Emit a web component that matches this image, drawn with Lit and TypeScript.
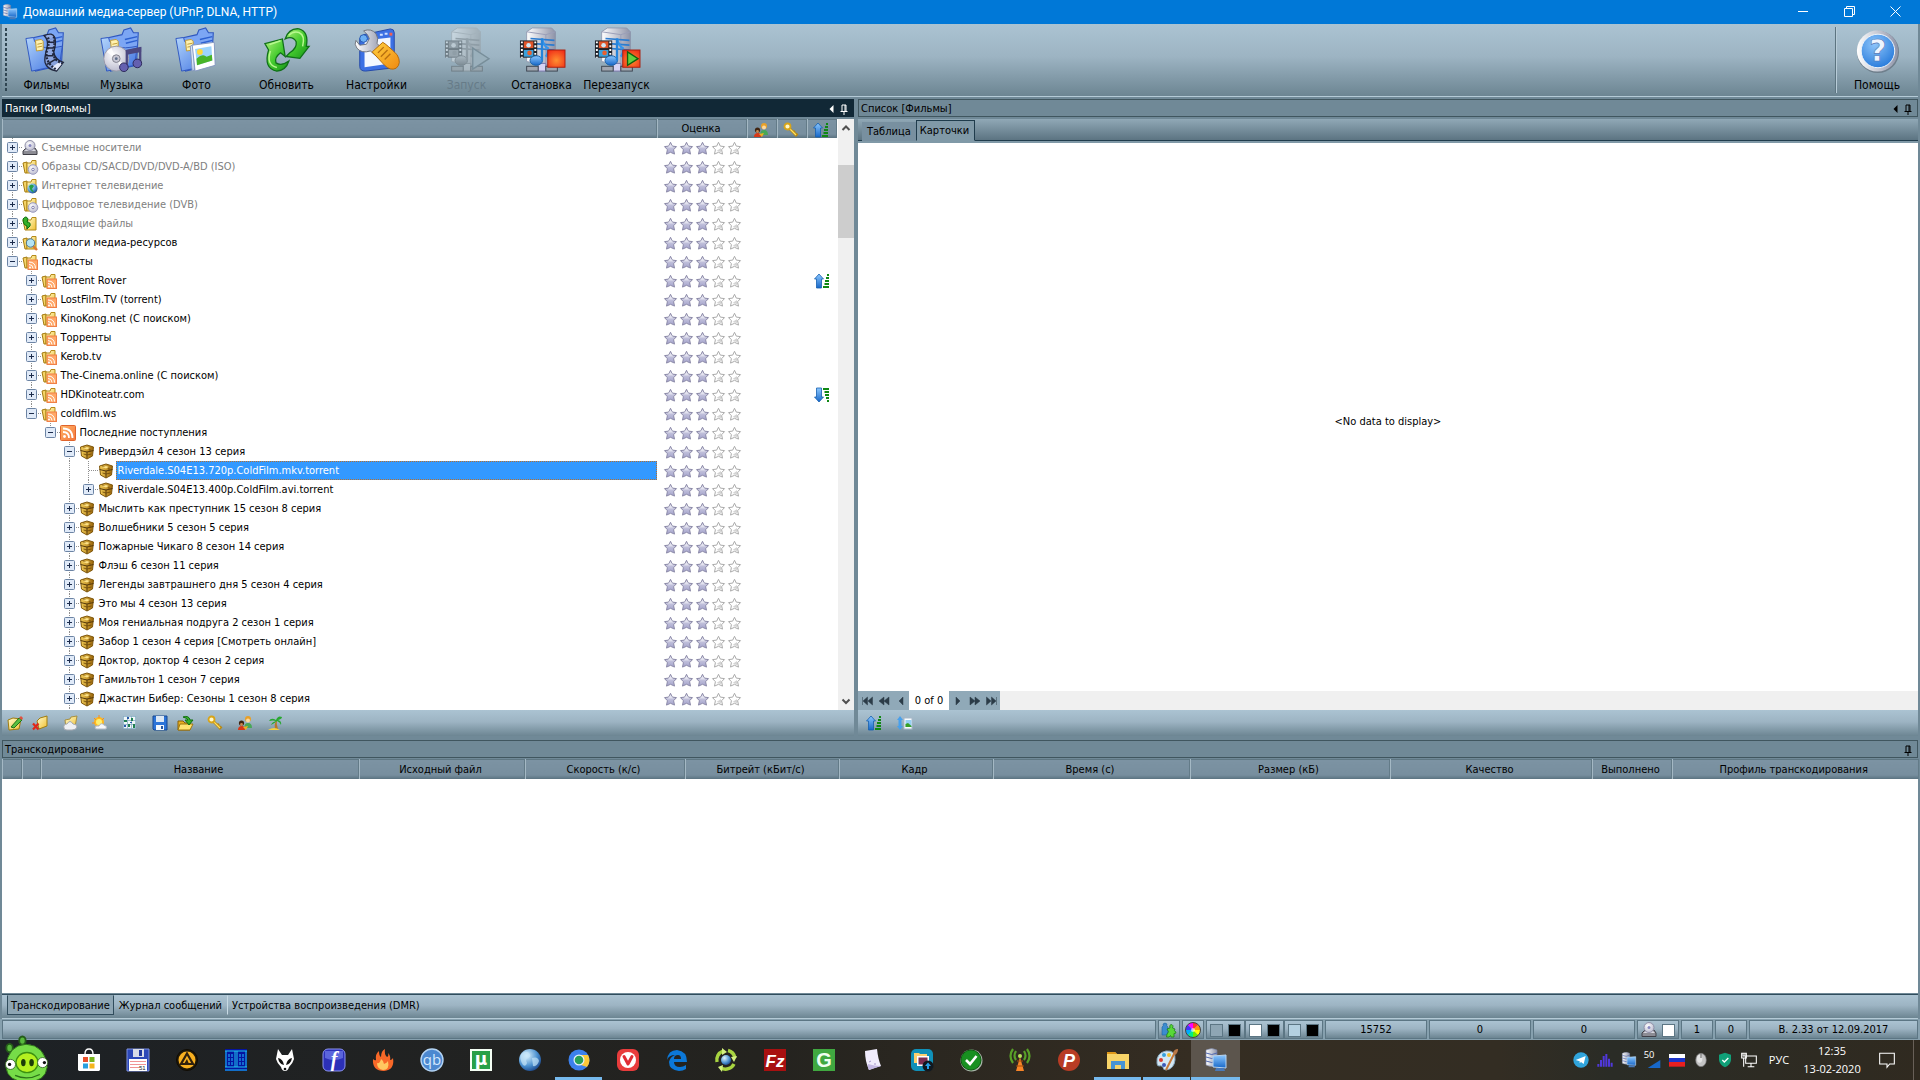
import { LitElement, html, svg, css, nothing } from "lit";
import { customElement, state } from "lit/decorators.js";
import { classMap } from "lit/directives/class-map.js";

/* ---------- shared icon parts ---------- */
const gradients = svg`
  <linearGradient id="gBlue" x1="0" y1="0" x2="1" y2="1"><stop offset="0" stop-color="#b4d6fb"/><stop offset="1" stop-color="#3c6fe0"/></linearGradient>
  <linearGradient id="gSky" x1="0" y1="0" x2="0" y2="1"><stop offset="0" stop-color="#8cc8ff"/><stop offset="1" stop-color="#1767c8"/></linearGradient>
  <linearGradient id="gGreen" x1="0" y1="0" x2="1" y2="1"><stop offset="0" stop-color="#b0f078"/><stop offset=".5" stop-color="#46cc30"/><stop offset="1" stop-color="#159316"/></linearGradient>
  <linearGradient id="gOrange" x1="0" y1="0" x2="1" y2="1"><stop offset="0" stop-color="#ffd040"/><stop offset="1" stop-color="#f08a10"/></linearGradient>
  <linearGradient id="gRss" x1="0" y1="0" x2="1" y2="1"><stop offset="0" stop-color="#ffb468"/><stop offset="1" stop-color="#f5763a"/></linearGradient>
  <linearGradient id="gGold" x1="0" y1="0" x2="1" y2="0"><stop offset="0" stop-color="#f5cf58"/><stop offset="1" stop-color="#9a6408"/></linearGradient>
  <linearGradient id="gFolder" x1="0" y1="0" x2="1" y2="1"><stop offset="0" stop-color="#fffbd0"/><stop offset="1" stop-color="#f0c030"/></linearGradient>
  <linearGradient id="gSteel" x1="0" y1="0" x2="1" y2="0"><stop offset="0" stop-color="#ffffff"/><stop offset="1" stop-color="#8e93a8"/></linearGradient>
  <linearGradient id="gStar" x1="0" y1="0" x2="0" y2="1"><stop offset="0" stop-color="#dcdce8"/><stop offset="1" stop-color="#a3a2cc"/></linearGradient>
  <radialGradient id="gRed" cx=".5" cy=".6" r=".7"><stop offset="0" stop-color="#ff9030"/><stop offset="1" stop-color="#f02c18"/></radialGradient>
  <radialGradient id="gHelp" cx=".4" cy=".3" r=".8"><stop offset="0" stop-color="#8cc4fa"/><stop offset="1" stop-color="#1f74d8"/></radialGradient>
  <radialGradient id="gGlobe" cx=".35" cy=".3" r=".8"><stop offset="0" stop-color="#e0f6ff"/><stop offset=".6" stop-color="#4a90d0"/><stop offset="1" stop-color="#143c80"/></radialGradient>
  <radialGradient id="gDisc" cx=".4" cy=".35" r=".7"><stop offset="0" stop-color="#ffffff"/><stop offset="1" stop-color="#b8b8cc"/></radialGradient>`;

const bigFolder = svg`
  <path d="M6 12 L24 8 L26 3 L33 1 L36 6 L41 6 L39 40 L12 46Z" fill="#7ca6f4" stroke="#3058c0" stroke-width="1.200"/>
  <path d="M27 13 L40 10 M28 17 L40 14" stroke="#2c60d0" stroke-width="1.500"/>
  <path d="M2 12 L10 11 Q12 26 40 20 L37 40 L8 46Z" fill="url(#gBlue)" stroke="#3058c0"/>
  <path d="M12 14 L18 13 L20 15 V24 L13 25Z" fill="#fff2b0" stroke="#c09a30"/>
  <path d="M14 18 L19 17 M14 21 L19 20" stroke="#c09a30"/>`;

const serverBase = svg`
  <path d="M8 5 L14 1 H34 L38 5 V36 L28 40 L8 36Z" fill="url(#gSteel)" stroke="#8890a8" stroke-width=".8"/>
  <path d="M8 5 L28 8 L38 5 M28 8 V38" fill="none" stroke="#9a9eb8"/>
  <path d="M12 12 L37 14 M12 17 L37 19 M12 22 L37 24" stroke="#2c7cd0" stroke-width="1.800"/>
  <path d="M20 38 H28 V46 H20Z" fill="#d6d4f4" stroke="#7874a8"/>
  <rect x="8" y="41" width="12" height="5" fill="#a0a6b0" stroke="#3c4450"/>
  <rect x="28" y="41" width="12" height="5" fill="#a0a6b0" stroke="#3c4450"/>
  <rect x="1" y="14" width="18" height="18" fill="#20242c"/>
  <path d="M3 15 V32 M17 15 V32" stroke="#fff" stroke-width="2" stroke-dasharray="2 2"/>
  <rect x="5" y="15" width="10" height="7" fill="#e05428"/><rect x="5" y="24" width="10" height="7" fill="#3aa0dc"/>
  <circle cx="10" cy="19" r="2.400" fill="#d0e8f4"/><circle cx="11" cy="27" r="2.400" fill="#e86030"/>
  <path d="M24 12 Q26 20 30 22 Q31 27 28 31" fill="none" stroke="#3494ec" stroke-width="2.400"/>
  <ellipse cx="18" cy="35" rx="6.500" ry="5" fill="url(#gSky)" stroke="#1860a8"/>
  <path d="M24 12 V35" stroke="#2484dc" stroke-width="2.400"/>`;

const key = svg`
  <path d="M6 6 L13.500 13.500 M10 11 L12 9 M12 14 L14.500 11.500" stroke="#b88810" stroke-width="2.600"/>
  <path d="M6 6 L13 13" stroke="#ffe060" stroke-width="1.300"/>
  <circle cx="4.500" cy="4.500" r="3" fill="#fff8c8" stroke="#d8a418" stroke-width="1.800"/>`;

const smallFolder = svg`
  <path d="M1 4 L5 3 V14 L3 14Z" fill="#f4d468" stroke="#a47a10"/>
  <path d="M5 4 H9 L10 1.500 H14 V14 H5Z" fill="url(#gFolder)" stroke="#b48a18"/>`;

const people = svg`
  <circle cx="4.500" cy="8" r="2.600" fill="#402410"/><path d="M1 15 Q1 11 5 11 Q8 11 8 15Z" fill="#d83818"/>
  <circle cx="4.500" cy="9.500" r="1.400" fill="#c88850"/>
  <circle cx="11" cy="4" r="3" fill="#e8a028"/><circle cx="11" cy="5.500" r="2" fill="#fcd8a0"/>
  <path d="M7.500 13 Q7 8 11 8 Q15 8 15 13Z" fill="#48a858"/><path d="M6 12 L9 15 L11 11Z" fill="#f0b020"/>`;

const sortBars = (up: boolean) => svg`
  <path d=${up ? "M5 1 L9.500 6 H7.500 V15 H2.500 V6 H.5Z" : "M5 15 L9.500 10 H7.500 V1 H2.500 V10 H.5Z"} fill="url(#gSky)" stroke="#1560b0" stroke-width=".8"/>
  <path d=${up ? "M13 2 H15 M12 5 H15 M11 8 H15 M10.500 11 H15 M9 14 H15" : "M9 2 H15 M10.500 5 H15 M11 8 H15 M12 11 H15 M13 14 H15"} stroke="#108814" stroke-width="2"/>`;

const serverMonitor = svg`
  <path d="M2 2 Q8 -1 13 2 V17 Q8 20 2 17Z" fill="url(#gSteel)" stroke="#7884a8" stroke-width=".6"/>
  <path d="M2 5 Q8 8 13 5 M2 9 Q8 12 13 9 M2 13 Q8 16 13 13" stroke="#5068b0" fill="none"/>
  <path d="M9 8 L22 7 V20 L9 19Z" fill="url(#gSky)" stroke="#b8d4f0"/>
  <path d="M12 20 H20 L21 23 H11Z" fill="#4878b8"/>`;

const wave = svg`<circle cx="4.500" cy="11.500" r="1.400" fill="#fff"/><path d="M3 7 Q9 7 9 13 M3 3.500 Q12.500 3.500 12.500 13" stroke="#fff" stroke-width="1.800" fill="none"/>`;

const icons: Record<string, unknown> = {
  films: svg`${bigFolder}
    <path d="M21 9 Q30 5 32 11 Q34 17 31 26 Q32 34 41 37 L34 46 Q24 44 22 37 Q21 32 24 22 Q26 13 21 9Z" fill="#9cacd8" fill-opacity=".7" stroke="#20263c" stroke-width="1.400"/>
    <path d="M25 16 H32 M24 22 H31 M22 30 H31 M24 39 L34 33" stroke="#20263c" stroke-width="1.600"/>
    <path d="M29 42 L36 37 L40 38 L34 45Z" fill="#e6eafc"/>
    <path d="M25 11 Q27 16 24 24 Q21 36 33 44 M31 10 Q33 16 30 26 Q31 35 40 38" fill="none" stroke="#20263c" stroke-width="2.400" stroke-dasharray="2 1.500"/>`,
  music: svg`${bigFolder}
    <circle cx="18" cy="33" r="13" fill="url(#gDisc)" stroke="#9a9aa8"/>
    <path d="M18 33 L8 26 A12 12 0 0 1 13 22Z M18 33 L28 40 A12 12 0 0 1 23 44Z" fill="#fff" opacity=".8"/>
    <circle cx="18" cy="33" r="4" fill="#c8c8d4" stroke="#80808c"/><circle cx="18" cy="33" r="1.500" fill="#60708c"/>
    <path d="M29 42 V25 L43 22 V38" fill="none" stroke="#4c4880" stroke-width="2.400"/><path d="M29 24 L44 21 V26 L29 29Z" fill="#4c4880"/>
    <ellipse cx="26" cy="42" rx="4.500" ry="4.500" fill="#6460b0" stroke="#2c2858"/><ellipse cx="40" cy="38" rx="4.500" ry="4.500" fill="#6460b0" stroke="#2c2858"/>`,
  photo: svg`${bigFolder}
    <path d="M17 20 L21 18 V45 L19 46Z" fill="#dce8fa" stroke="#8498c0"/>
    <path d="M19 19 L42 16 L43 40 L22 46Z" fill="#fff" stroke="#8498c0"/>
    <path d="M22 23 L39 20 L40 35 L24 40Z" fill="#9cd4fc"/><path d="M24 40 L23.500 33 Q30 27 34 31 L39.500 29 L40 35Z" fill="#48b428"/>
    <circle cx="27" cy="26" r="3" fill="#ffd838"/>`,
  refresh: svg`
    <path d="M24 12 Q28 0 39 1 Q50 4 47 20 L50 20 L40 33 L25 31 L29 27 Q37 22 36 15 Q32 8 24 12Z" fill="url(#gGreen)" stroke="#107018" stroke-width="1.400"/>
    <path d="M28 8 Q33 3 39 5 Q46 8 43 20" fill="none" stroke="#b8f890" stroke-width="1.600"/>
    <path d="M2 17 L21 12 L24 31 L19 27 Q12 32 14 38 Q20 42 28 36 Q25 46 15 47 Q0 44 6 24Z" fill="url(#gGreen)" stroke="#107018" stroke-width="1.400"/>
    <path d="M8 25 Q3 40 15 43 M7 18 L19 14" fill="none" stroke="#b8f890" stroke-width="1.600"/>`,
  settings: svg`
    <path d="M10 8 L38 2 Q42 2 42 6 V38 Q42 42 38 43 L12 46 Q6 46 6 41 V12Z" fill="#3c70e4" stroke="#2448a8"/>
    <path d="M11 14 L38 11 V38 L11 42Z" fill="#f4f8ff"/>
    <path d="M27 8 H30 M32 7 H35" stroke="#cfe0ff" stroke-width="2"/><rect x="37" y="6" width="3" height="3" fill="#f06050"/>
    <circle cx="10" cy="12" r="4" fill="#6cb0f4" stroke="#2858b0"/>
    <path d="M10 4 Q18 1 23 7 Q26 12 24 17 L31 25 L25 32 L17 25 Q8 28 3 22 Q0 18 2 14 L6 19 L13 18 L16 12 L14 8Z" fill="url(#gSteel)" stroke="#70747c"/>
    <path d="M19 26 L30 16 Q34 18 45 29 Q50 38 44 43 Q38 46 32 40Z" fill="url(#gOrange)" stroke="#b46808"/>
    <path d="M25 27 L31 21 M28 31 L35 24 M32 34 L38 28" stroke="#b87010" stroke-width="1.400"/>`,
  start: svg`<g opacity=".38" filter="grayscale(1)">${serverBase}</g><path d="M30 22 L47 33 L30 44Z" fill="#9ab0bc" stroke="#788e9a" stroke-width="1.400"/>`,
  stop: svg`${serverBase}<rect x="30" y="24" width="18" height="18" fill="url(#gRed)" stroke="#a82010"/>`,
  restart: svg`${serverBase}<rect x="30" y="24" width="18" height="18" fill="url(#gRed)" stroke="#a82010"/><path d="M35 26 L46 33 L35 40Z" fill="#64d040" stroke="#106010" stroke-width="1.400"/>`,
  help: svg`
    <circle cx="25" cy="26" r="22" fill="#6f7f8c"/><circle cx="24.500" cy="25" r="21.500" fill="url(#gSteel)"/>
    <circle cx="25" cy="25" r="17.500" fill="url(#gHelp)" stroke="#f4f8fc"/>
    <text x="25" y="36" text-anchor="middle" font-family="DejaVu Sans, sans-serif" font-weight="700" font-size="31" fill="#eef4ff" stroke="#4c74b4" stroke-width=".6">?</text>`,

  drive: svg`<path d="M1 11 L4 8 H13 L15 11 V14.500 H1Z" fill="#8c8c94" stroke="#404048"/><path d="M2 11 L5 9 H12 L14 11Z" fill="#d8d8e0"/><circle cx="8" cy="5.500" r="5" fill="url(#gDisc)" stroke="#9090a8"/><circle cx="8" cy="5.500" r="1.500" fill="#8888c0"/>`,
  fDisc: svg`${smallFolder}<circle cx="11" cy="10.500" r="4.800" fill="url(#gDisc)" stroke="#9c9cc0"/><circle cx="11" cy="10.500" r="1.300" fill="#fff" stroke="#8080b0"/>`,
  fGlobe: svg`${smallFolder}<circle cx="10.500" cy="10.500" r="5" fill="url(#gGlobe)"/><path d="M7 8 Q10 5 12 8 L10 11 L12 14 Q8 14 7 8Z" fill="#28a048"/>`,
  fIn: svg`${smallFolder}<path d="M1 3 Q4 -1 6 3 L5 6 Q9 6 8 10 L5 13 V10 Q1 9 1 3Z" fill="#34b028" stroke="#0c6c10"/>`,
  fSearch: svg`${smallFolder}<path d="M11 11 L15 15" stroke="#e07830" stroke-width="2.400"/><circle cx="8.500" cy="8" r="4.200" fill="#b4e4f4" stroke="#507890"/>`,
  fRss: svg`${smallFolder}<rect x="6" y="6" width="9.500" height="9.500" fill="#ffa868" stroke="#f08048"/><circle cx="8" cy="13.500" r="1" fill="#fff"/><path d="M7 10.500 Q11 10.500 11 14.500 M7 8 Q13.500 8 13.500 14.500" stroke="#fff" fill="none"/>`,
  rss: svg`<rect x=".5" y=".5" width="15" height="15" rx="1" fill="url(#gRss)" stroke="#e0642c"/>${wave}`,
  box: svg`<path d="M1.500 3 L8 1 L14.500 3 L13.500 12 L8 15 L2.500 12Z" fill="url(#gGold)" stroke="#80580c"/><path d="M1.500 6.500 L8 8 L14.500 6.500 M8 8 V14.500" fill="none" stroke="#54380a"/><path d="M4 2.800 L11 5 V8 M4.500 10 L8 11 L12.500 10" fill="none" stroke="#6c4808" stroke-width=".8"/><path d="M4 4 L8 3 L11 4 L8 5.500Z" fill="#ffe488"/>`,
  people, key,
  up: sortBars(true),
  down: sortBars(false),
  edit: svg`<path d="M1 5 L6 3 L14 4 L12 14 L2 15Z" fill="url(#gFolder)" stroke="#a07c10"/><path d="M4 12 L12 3 L15 5 L7 13Z" fill="#58c040" stroke="#207018"/><path d="M12 3 L14 1 L16 3 L15 5Z" fill="#e05040"/>`,
  remove: svg`<path d="M5 6 L8 3 L15 1 V11 L7 14Z" fill="url(#gFolder)" stroke="#a07c10"/><path d="M1 8.500 L6.500 14.500 M6.500 8.500 L1 14.500" stroke="#e02818" stroke-width="2.200"/>`,
  cloud: svg`<path d="M3 5 L8 4 L9 2 L15 1 L13 12 L4 13Z" fill="url(#gFolder)" stroke="#a89040"/><path d="M2 13 Q1 9 5 9 Q8 4 11 9 Q15 9 15 12 Q14 15 10 15 H5 Q2 15 2 13Z" fill="#eef0f4" stroke="#a4a8b0"/>`,
  sun: svg`<circle cx="7" cy="7" r="5" fill="#ffb820"/><circle cx="7" cy="7" r="3" fill="#fff070"/><path d="M2 3 L4 5 M7 0 V3 M0 8 H3 M12 3 L10 5" stroke="#f89018"/><path d="M3 13 Q3 10 7 11 Q9 7 12 10 Q16 11 14 14 H5 Q3 14 3 13Z" fill="#f4f6fa" stroke="#b0b8c4"/>`,
  grid: svg`<rect x="1" y="1" width="13" height="13" fill="#f0f8f8"/><path d="M1 1.500 H14 M1 5.500 H14 M1 9.500 H14 M1 13.500 H14 M1.500 1 V14 M5.500 1 V14 M9.500 1 V14 M13.500 1 V14" stroke="#88acc4" stroke-width=".8"/><path d="M2 5 H5 V7 H2Z M9 3 H11 V6 H9Z M6 9 H8 V12 H6Z M11 9 H13 V13 H11Z" fill="#208050"/><path d="M5 2 H7 V4 H5Z M8 7 H10 V8 H8Z M2 10 H4 V12 H2Z" fill="#2858a8"/>`,
  save: svg`<path d="M1 1 H15 V15 H2 L1 14Z" fill="#2c74d8" stroke="#164890"/><rect x="4" y="1" width="8" height="6" fill="#dce8f4"/><rect x="4" y="10" width="8" height="5" fill="#f4f8fc"/><rect x="9" y="11" width="2" height="3" fill="#2858a0"/>`,
  open: svg`<path d="M1 6 H6 L8 8 H13 V15 H1Z" fill="#e8b020" stroke="#886008"/><path d="M3 9 H16 L13 15 H1Z" fill="#ffe470" stroke="#a07810"/><path d="M6 2 Q12 0 13 5 H16 L12 10 L8 5 H11 Q10 3 6 2Z" fill="#38b028" stroke="#107010"/>`,
  palm: svg`<path d="M9 5 Q7 10 8 14 H11 Q9 9 10 5Z" fill="#b87828"/><path d="M9 5 Q4 2 2 6 Q6 5 9 6 Q5 7 4 10 Q8 8 10 6 Q13 7 14 10 Q15 6 11 5 Q15 4 15 2 Q11 0 9 5Z" fill="#28a830"/><path d="M1 15 Q7 11 13 15Z" fill="#f4d040"/>`,
  sortPic: svg`<path d="M4 1 L7 5 H5.500 V11 H7 L4 15 L1 11 H2.500 V5 H1Z" fill="#48a0ec"/><rect x="8" y="3" width="8" height="11" fill="#f8fcff" stroke="#a8b8c8"/><rect x="9.500" y="5" width="6" height="7" fill="#98d0f4"/><path d="M9.500 12 V9 L12 8 L15.500 11 V12Z" fill="#38a028"/>`,
  puzzle: svg`<path d="M1 5 Q3 4 2 2 Q4 0 6 2 Q5 4 7 5 V13 H1Z" fill="#3c8cd0" stroke="#2060a0" stroke-width=".6"/><path d="M6 7 L9 6 Q8 3 10 2.500 Q13 3 11.500 6 L14 7 Q12 9 15 10 Q15 12 13 11.500 V15 H10 Q10 12 8 15 H5.500 L6 12 Q9 10 6 7Z" fill="#58d838" stroke="#208018" stroke-width=".8"/>`,
  wheel: svg`<g>${["#f33", "#f0f", "#43f", "#0af", "#0e8", "#6e0", "#ff0", "#f90"].map((c, i) => svg`<path d="M8 8 L8 .500 A7.500 7.500 0 0 1 13.300 2.700Z" fill=${c} transform="rotate(${-45 * i} 8 8)"/>`)}</g><circle cx="8" cy="8" r="2" fill="#fff" opacity=".6"/><circle cx="8" cy="8" r="7.500" fill="none" stroke="#444"/>`,

  pig: svg`<ellipse cx="5" cy="13" rx="3.500" ry="4.500" fill="#58b83c" stroke="#245c18" stroke-width="2"/><ellipse cx="19" cy="5" rx="3.500" ry="4.500" fill="#58b83c" stroke="#245c18" stroke-width="2"/>
    <path d="M1 34 Q3 10 23 9 Q44 10 46 34 Q44 50 24 50 Q3 50 1 34Z" fill="#76dc48" stroke="#2c7018"/>
    <ellipse cx="24" cy="29" rx="12" ry="11" fill="#b4f020" stroke="#3c9010" stroke-width="1.400"/>
    <ellipse cx="20" cy="29" rx="2.500" ry="4" fill="#1c3c08"/><ellipse cx="29" cy="29" rx="2.500" ry="4" fill="#1c3c08"/>
    <circle cx="6" cy="31" r="5.500" fill="#fff" stroke="#3c7028"/><circle cx="41" cy="29" r="5.500" fill="#fff" stroke="#3c7028"/>
    <circle cx="5" cy="31" r="1.800" fill="#111"/><circle cx="43" cy="29" r="1.800" fill="#111"/>
    <path d="M11 43 Q24 49 38 42" stroke="#2c7018" fill="none" stroke-width="1.400"/>`,
  store: svg`<path d="M8 6 Q8 1 12 1 Q16 1 16 6" fill="none" stroke="#fff" stroke-width="1.400"/><path d="M1 6 H23 V22 L22 23 H2 L1 22Z" fill="#fff"/><rect x="6" y="9" width="5" height="5" fill="#e8502c"/><rect x="12.500" y="9" width="5" height="5" fill="#78b41c"/><rect x="6" y="15.500" width="5" height="5" fill="#28a0e0"/><rect x="12.500" y="15.500" width="5" height="5" fill="#f4b41c"/>`,
  floppy: svg`<path d="M1 1 H23 V23 H1Z" fill="#2c48b8" stroke="#7c90e0"/><rect x="7" y="1" width="11" height="8" fill="#d8dce8"/><rect x="13" y="2" width="3" height="6" fill="#2038a0"/><rect x="3" y="11" width="18" height="12" fill="#fff"/><path d="M4 13.500 H20 M4 16.500 H20 M4 19.500 H13" stroke="#f09494"/><text x="13" y="22" font-size="6" font-family="Liberation Sans, sans-serif" fill="#222">51</text>`,
  aimp: svg`<circle cx="12" cy="12" r="10.500" fill="#201808" stroke="#100c04"/><circle cx="12" cy="12" r="8.500" fill="#f8b020"/><path d="M12 5.500 L18 16 H6Z" fill="none" stroke="#30200c" stroke-width="2.200"/><path d="M9 16 L12 11 L14 16" fill="#30200c"/>`,
  far: svg`<rect x="1" y="1" width="22" height="22" fill="#0414a0"/><path d="M1 3 H23 M1 19 H23 M1 22 H23 M2 3 V19 M11 3 V19 M13 3 V19 M22 3 V19" stroke="#20c8f0"/><path d="M5 6 V17 M8 6 V17 M16 6 V17 M19 6 V17" stroke="#1888e0" stroke-width="1.500" stroke-dasharray="3 1"/>`,
  foobar: svg`<path d="M5 1 L9 7 H15 L19 1 L21 11 Q20 15 16 19 Q15 23 12 23 Q9 23 8 19 Q4 15 3 11Z" fill="#fff"/><path d="M5 10 Q10 11 11 17 Q6 16 5 10Z M19 10 Q14 11 13 17 Q18 16 19 10Z" fill="#111"/><circle cx="12" cy="21" r="1.300" fill="#111"/>`,
  fsquare: svg`<rect x="1" y="1" width="22" height="22" rx="5" fill="#2c30b8" stroke="#8c94f0"/><path d="M3 3 H21 V10 Q12 14 3 10Z" fill="#7c88f4" opacity=".6"/><text x="12" y="18" text-anchor="middle" font-family="Liberation Serif, serif" font-style="italic" font-weight="700" font-size="20" fill="#fff">f</text>`,
  flame: svg`<path d="M2 11 Q4 13 5 12 Q4 6 8 3 Q8 8 10 9 Q10 3 14 1 Q13 6 16 9 Q18 8 17 5 Q20 8 19 12 Q21 12 22 10 Q24 22 13 23 Q1 23 2 11Z" fill="#f86828"/><path d="M6 15 Q9 16 10 11 Q13 13 13 16 Q16 15 17 13 Q19 22 12 22 Q6 21 6 15Z" fill="#ffc860"/>`,
  qb: svg`<circle cx="12" cy="12" r="11" fill="#4c88d0" stroke="#b4d4f4" stroke-width="1.400"/><text x="12" y="17" text-anchor="middle" font-family="Open Sans, sans-serif" font-size="15" fill="#d4e8ff">qb</text>`,
  mu: svg`<rect x="1" y="1" width="22" height="22" fill="#f4fff4"/><rect x="3" y="3" width="18" height="18" fill="#28a048"/><text x="12" y="17" text-anchor="middle" font-family="DejaVu Sans, sans-serif" font-weight="700" font-size="17" fill="#fff">µ</text>`,
  globe: svg`<circle cx="12" cy="12" r="11" fill="url(#gGlobe)"/><path d="M3 6 Q8 2 11 5 Q14 8 10 10 Q7 11 9 15 Q8 19 5 17 Q1 11 3 6Z M14 10 Q20 8 21 13 Q19 19 15 18Z" fill="#c4e4f8" opacity=".7"/>`,
  chrome: svg`<circle cx="12" cy="12" r="10.500" fill="#3c80ec"/><path d="M13 7 H21 A11 11 0 0 1 20 19 L14 17Z" fill="#fcc838"/><circle cx="12" cy="12" r="5.500" fill="#e8f0fc"/><circle cx="12" cy="12" r="4.300" fill="#28a058"/>`,
  vivaldi: svg`<rect x="1" y="1" width="22" height="22" rx="6" fill="#e83c3c"/><circle cx="12" cy="12" r="8" fill="#fff"/><path d="M8 8.500 L12 16 L16 8.500" fill="none" stroke="#e02c34" stroke-width="3" stroke-linecap="round" stroke-linejoin="round"/>`,
  edge: svg`<path d="M2 12 Q3 2 12 2 Q22 3 22 14 H9 Q9 19 15 19 Q18 19 21 17 V21 Q18 23 14 23 Q4 22 4 14 Q5 9 10 7 Q4 7 2 12Z M9 11 H16 Q16 7 13 7 Q9 7 9 11Z" fill="#0c78d8" fill-rule="evenodd"/>`,
  sync: svg`<path d="M3 14 A9.500 9.500 0 0 1 9 3 M14 2.500 A9.500 9.500 0 0 1 21 10 M20 16 A9.500 9.500 0 0 1 7 20" fill="none" stroke="#a8d440" stroke-width="3.400"/><path d="M8 0 L13 4 L8 7Z M23 8 L20 14 L17 9Z M9 17 L4 19 L8 24Z" fill="#d4f080"/><circle cx="12" cy="12" r="5" fill="url(#gGlobe)"/>`,
  fz: svg`<rect x="1" y="1" width="22" height="22" fill="#a81010"/><text x="12" y="19" text-anchor="middle" font-family="Liberation Sans, sans-serif" font-weight="700" font-style="italic" font-size="17" fill="#fff">Fz</text>`,
  g: svg`<rect x="1" y="1" width="22" height="22" fill="#40a840"/><text x="12" y="19" text-anchor="middle" font-family="Liberation Sans, sans-serif" font-weight="700" font-size="20" fill="#f0fff0">G</text>`,
  paper: svg`<path d="M4 3 L16 1 Q17 11 20 18 Q13 20 8 22 Q4 13 4 3Z" fill="#f0ecfc"/><path d="M8 22 Q6 18 7 16 Q13 18 20 18Z" fill="#c4b8e4"/><path d="M8 14 L10 13 M13 16 H15" stroke="#a494cc"/>`,
  photos: svg`<rect x="1" y="1" width="22" height="22" rx="5" fill="#1090b8"/><path d="M4 5 H9 L10 6 H17 V15 H4Z" fill="#fcd070"/><rect x="7" y="8" width="12" height="10" fill="#fff"/><rect x="8.500" y="9.500" width="9" height="7" fill="#7c2c50"/><circle cx="18" cy="18" r="5.500" fill="#101820"/><path d="M18 14.500 L21 18 H19 V21 H17 V18 H15Z" fill="#28a0e8"/>`,
  check: svg`<circle cx="12.500" cy="12.500" r="11" fill="#a8b4a8"/><circle cx="12" cy="12" r="10" fill="#189020" stroke="#0c5c10"/><path d="M7 12 L11 16 L17.500 8" fill="none" stroke="#fff" stroke-width="2.600"/>`,
  tower: svg`<path d="M12 9 L16 23 H8Z" fill="#f88428"/><path d="M9 13 H15 M8 18 H16" stroke="#a84c08"/><circle cx="12" cy="8" r="2" fill="#b4e458"/><path d="M8 12 Q5 8 8 3 M16 12 Q19 8 16 3 M5 15 Q0 8 5 1 M19 15 Q24 8 19 1" fill="none" stroke="#58a028" stroke-width="2.200"/>`,
  p: svg`<circle cx="12" cy="12" r="11" fill="#b83c24"/><text x="12" y="18.500" text-anchor="middle" font-family="Liberation Sans, sans-serif" font-weight="700" font-style="italic" font-size="18" fill="#fff">P</text>`,
  explorer: svg`<path d="M1 4 H9 L11 6 H23 V21 H1Z" fill="#f8d468"/><path d="M1 4 H9 L11 6 H1Z" fill="#e09818"/><path d="M5 21 V13 H19 V21 H15 V17 H9 V21Z" fill="#4894d4"/>`,
  paint: svg`<path d="M2 15 Q1 5 11 3 Q21 2 20 12 Q19 21 11 22 Q8 22 8 19 Q6 17 4 18 Q2 18 2 15Z" fill="#d4e8f4" stroke="#88a8c0"/><circle cx="6" cy="12" r="2" fill="#d83c30"/><circle cx="9" cy="7" r="2" fill="#38a0dc"/><circle cx="14" cy="7" r="2" fill="#f0c030"/><circle cx="9" cy="17" r="2" fill="#3c58b8"/><path d="M20 4 L11 22" stroke="#c87838" stroke-width="2"/><path d="M18 5 Q19 1 23 1 Q23 5 20 7Z" fill="#b87848"/>`,
  serverMonitor,

  telegram: svg`<circle cx="12" cy="12" r="11.500" fill="#30a4dc"/><path d="M4 12 L19 6 L16 18 L12 15 L10 17 V14Z" fill="#fff"/>`,
  bars: svg`<path d="M2 22 V18 M6 22 V12 M10 22 V6 M14 22 V3 M18 22 V10 M22 22 V16" stroke="#5038dc" stroke-width="3"/>`,
  signal: svg`<path d="M23 12 V24 H4Z" fill="#1868c8"/><text x="-2" y="9" font-family="Open Sans, sans-serif" font-size="14" fill="#fff">50</text>`,
  flag: svg`<rect x="0" y="3" width="24" height="6.500" fill="#fff"/><rect x="0" y="9" width="24" height="6" fill="#1c34c8"/><rect x="0" y="15" width="24" height="7" fill="#e82020"/>`,
  mouse: svg`<ellipse cx="12" cy="12" rx="8" ry="10" fill="#c4c4c4" stroke="#707070"/><ellipse cx="10" cy="10" rx="4" ry="6" fill="#e4e4e4"/><path d="M12 3 V9" stroke="#808080" stroke-width="2"/>`,
  shield: svg`<path d="M12 1 L21 4 V12 Q20 20 12 23 Q4 20 3 12 V4Z" fill="#10a078"/><path d="M8 12 L11 15 L17 9" fill="none" stroke="#fff" stroke-width="2"/>`,
  network: svg`<path d="M7 6 H23 V17 H7Z M15 17 V22 M10 22 H20 M1 2 H8 V9 H1Z M4 9 V22" fill="none" stroke="#fff" stroke-width="1.600"/><path d="M3 2 V6 H6 V2" stroke="#fff" stroke-width="1.600" fill="none"/>`,
  notify: svg`<path d="M1 2 H23 V18 H16 L12 23 V18 H1Z" fill="none" stroke="#fff" stroke-width="1.600"/>`,
};

/* ---------- data ---------- */
interface Node {
  text: string;
  icon: string;
  level: number;
  toggle?: "plus" | "minus";
  dim?: boolean;
  sort?: "up" | "down";
  last?: boolean;
  rails?: number[];
}

const series = [
  "Мыслить как преступник 15 сезон 8 серия",
  "Волшебники 5 сезон 5 серия",
  "Пожарные Чикаго 8 сезон 14 серия",
  "Флэш 6 сезон 11 серия",
  "Легенды завтрашнего дня 5 сезон 4 серия",
  "Это мы 4 сезон 13 серия",
  "Моя гениальная подруга 2 сезон 1 серия",
  "Забор 1 сезон 4 серия [Смотреть онлайн]",
  "Доктор, доктор 4 сезон 2 серия",
  "Гамильтон 1 сезон 7 серия",
  "Джастин Бибер: Сезоны 1 сезон 8 серия",
];

const top = (text: string, icon: string, dim = true): Node => ({ text, icon, level: 0, toggle: "plus", dim });
const feed = (text: string, sort?: "up" | "down"): Node => ({ text, icon: "fRss", level: 1, toggle: "plus", sort });

const nodes: Node[] = [
  top("Съемные носители", "drive"),
  top("Образы CD/SACD/DVD/DVD-A/BD (ISO)", "fDisc"),
  top("Интернет телевидение", "fGlobe"),
  top("Цифровое телевидение (DVB)", "fDisc"),
  top("Входящие файлы", "fIn"),
  top("Каталоги медиа-ресурсов", "fSearch", false),
  { text: "Подкасты", icon: "fRss", level: 0, toggle: "minus", last: true },
  feed("Torrent Rover", "up"),
  feed("LostFilm.TV (torrent)"),
  feed("KinoKong.net (С поиском)"),
  feed("Торренты"),
  feed("Kerob.tv"),
  feed("The-Cinema.online (С поиском)"),
  feed("HDKinoteatr.com", "down"),
  { text: "coldfilm.ws", icon: "fRss", level: 1, toggle: "minus", last: true },
  { text: "Последние поступления", icon: "rss", level: 2, toggle: "minus", last: true },
  { text: "Ривердэйл 4 сезон 13 серия", icon: "box", level: 3, toggle: "minus" },
  { text: "Riverdale.S04E13.720p.ColdFilm.mkv.torrent", icon: "box", level: 4, rails: [3] },
  { text: "Riverdale.S04E13.400p.ColdFilm.avi.torrent", icon: "box", level: 4, toggle: "plus", last: true, rails: [3] },
  ...series.map((text): Node => ({ text, icon: "box", level: 3, toggle: "plus" })),
  { text: "", icon: "box", level: 3, toggle: "plus" },
];

const columns: [string, number][] = [
  ["", 20], ["", 19], ["Название", 318], ["Исходный файл", 166], ["Скорость (к/с)", 160], ["Битрейт (кБит/с)", 154],
  ["Кадр", 154], ["Время (с)", 197], ["Размер (кБ)", 200], ["Качество", 202], ["Выполнено", 80], ["Профиль транскодирования", 246],
];

const toolGroups: [string, string][][] = [
  [["films", "Фильмы"], ["music", "Музыка"], ["photo", "Фото"]],
  [["refresh", "Обновить"]],
  [["settings", "Настройки"]],
  [["start", "Запуск"], ["stop", "Остановка"], ["restart", "Перезапуск"]],
];

const folderTools: [string, string][][] = [
  [["edit", "Изменить"], ["remove", "Удалить"]], [["cloud", "Скрыть"]], [["sun", "Показать"]], [["grid", "Таблица"]],
  [["save", "Сохранить"], ["open", "Загрузить"]], [["key", "Доступ"]], [["people", "Пользователи"]], [["palm", "Отдых"]],
];

const taskApps: [string, string][] = [
  ["store", ""], ["floppy", ""], ["aimp", ""], ["far", ""], ["foobar", ""], ["fsquare", ""], ["flame", ""], ["qb", ""],
  ["mu", ""], ["globe", ""], ["chrome", "open"], ["vivaldi", ""], ["edge", ""], ["sync", ""], ["fz", ""], ["g", ""],
  ["paper", ""], ["photos", ""], ["check", ""], ["tower", ""], ["p", ""], ["explorer", "open"], ["paint", "open"],
  ["serverMonitor", "active"],
];

const boxes: Record<string, string> = { s: "0 0 16 16", m: "0 0 24 24", l: "0 0 48 48", xl: "1 0 50 48" };
const icon = (name: string, size: string, cls: string) =>
  html`<svg class=${cls} viewBox=${boxes[size]} aria-hidden="true">${icons[name]}</svg>`;

const starPath = "M6.500 .8 L8.300 4.600 L12.500 5.100 L9.600 8.200 L10.500 12.600 L6.500 10.800 L2.500 12.600 L3.400 8.200 L.5 5.100 L4.700 4.600Z";
const stars = html`<svg class="stars" viewBox="0 0 78 14" role="img" aria-label="3 из 5">
  ${[0, 1, 2, 3, 4].map((i) => svg`<path d=${starPath} transform="translate(${i * 16} .5)" stroke-linejoin="round"
    fill=${i < 3 ? "url(#gStar)" : "#fff"} stroke=${i < 3 ? "#8c8aa8" : "#ababab"}/>
    ${i < 3 ? svg`<path d="M3.500 6 L6.500 2.500 L9.500 6Z" fill="#f4f4fa" opacity=".6" transform="translate(${i * 16} .5)"/>`
      : svg`<path d="M4.500 9.500 L9 6.500 L9 10.500Z" fill="#d4d4d4" transform="translate(${i * 16} .5)"/>`}`)}
</svg>`;

const pin = html`<svg class="glyph" viewBox="0 0 10 12" aria-hidden="true"><path d="M3 8 V2 H7 V8 M6 2 V8 M1.500 8.500 H8.500 M5 9 V12" fill="none" stroke="currentColor"/></svg>`;
const arrow = html`<svg class="glyph" viewBox="0 0 10 12" aria-hidden="true"><path d="M7.500 2 V10 L3.500 6Z" fill="currentColor"/></svg>`;

const navIcons: Record<string, string> = {
  "Первая": "M1.500 2 V10 M6.500 2 V10 L2 6Z M11.500 2 V10 L7 6Z",
  "Назад на страницу": "M6 2 V10 L1 6Z M11 2 V10 L6 6Z",
  "Назад": "M8 2 V10 L4 6Z",
  "Вперёд": "M4 2 V10 L8 6Z",
  "Вперёд на страницу": "M1 2 V10 L6 6Z M6 2 V10 L11 6Z",
  "Последняя": "M.5 2 V10 L5 6Z M5.500 2 V10 L10 6Z M10.500 2 V10",
};

@customElement("app-root")
export class AppRoot extends LitElement {
  @state() private selected = 17;
  @state() private listTab = 1;
  @state() private bottomTab = 0;

  static styles = css`
    :host {
      --edge: #708997;
      --bar: linear-gradient(#abc3d2, #9db4c3 45%, #6c8592);
      display: flex;
      flex-direction: column;
      height: 100vh;
      overflow: hidden;
      background: var(--edge);
      color: #000;
      font: 11px/14px "DejaVu Sans Condensed", "DejaVu Sans", sans-serif;
    }
    * { box-sizing: border-box; }
    button {
      border: 0; padding: 0; margin: 0; background: none; color: inherit; font: inherit;
      display: flex; align-items: center; justify-content: center;
    }
    h1, h2 { margin: 0; font: inherit; }
    svg { display: block; flex: none; overflow: visible; }
    .defs { width: 0; height: 0; position: absolute; }
    .i16 { width: 16px; height: 16px; }
    .i24 { width: 24px; height: 24px; }
    .i46 { width: 46px; height: 46px; }
    .glyph { width: 10px; height: 12px; }
    .grow { flex: 1; min-width: 0; }

    .title { display: flex; align-items: center; height: 24px; flex: none; background: #0078d7; color: #fff; padding: 0 2px; font-family: Roboto, sans-serif; }
    .title h1 { font-size: 12px; line-height: 16px; flex: 1; padding-left: 5px; }
    .title button { width: 46px; height: 23px; padding-bottom: 2px; }
    .winglyph { width: 11px; height: 11px; }

    .toolbar { display: flex; height: 73px; flex: none; background: var(--bar); border-bottom: 1px solid #b4cad6; padding: 2px 5px 0; margin: 0 2px; gap: 15px; font-size: 12px; }
    .grip { width: 2px; margin: 2px 0 4px -2px; background: repeating-linear-gradient(#304652 0 3px, transparent 3px 5px); margin-right: -13px; }
    .tools { display: flex; }
    .tool { width: 75px; flex-direction: column; justify-content: flex-start; gap: 5px; padding-top: 1px; white-space: nowrap; }
    .tool:disabled { color: #667b88; }
    .help { border-left: 1px solid #5c7480; box-shadow: inset 1px 0 #b8ccd8; width: 83px; margin: 1px -5px 3px 0; padding-top: 0; }

    .work { flex: 638 1 0; min-height: 0; display: grid; grid-template-columns: 852fr 1060fr; gap: 4px; padding: 2px 2px 0; }
    .panel { display: flex; flex-direction: column; min-width: 0; min-height: 0; }
    .caption { display: flex; align-items: center; height: 18px; flex: none; padding: 1px 4px 0 2px; gap: 3px; border: 1px solid #40565f; background: #708997; }
    .caption.active { background: #112836; border-color: #112836; color: #fff; }

    .tree { flex: 1; min-height: 0; display: flex; margin-top: 2px; background: #fff; overflow: hidden; }
    .scroller { flex: 1; min-width: 0; overflow: hidden; }
    table { border-collapse: collapse; table-layout: fixed; width: 100%; }
    th { height: 19px; padding: 1px 2px 0 0; font-weight: 400; background: linear-gradient(#7c93a3, #778e9e 80%, #5a7280); border-left: 1px solid #a4b8c4; box-shadow: inset 0 1px #5f7783, inset -1px 0 #637b88; overflow: hidden; white-space: nowrap; }
    th svg { margin: 1px auto 0; }
    td { padding: 0; height: 19px; }
    .c-rate { width: 90px; }
    .c-flag { width: 30px; }
    .line { display: flex; align-items: center; height: 19px; white-space: nowrap; }
    .cell { width: 19px; height: 19px; flex: none; display: flex; align-items: center; justify-content: flex-start; padding-left: 4px; background-repeat: no-repeat; }
    .rail { background-image: repeating-linear-gradient(#909090 0 1px, transparent 1px 2px); background-size: 1px 100%; background-position: 9px 0; }
    .stub { background-image: repeating-linear-gradient(#909090 0 1px, transparent 1px 2px), repeating-linear-gradient(90deg, #909090 0 1px, transparent 1px 2px); background-size: 1px 100%, 9px 1px; background-position: 9px 0, 10px 9px; }
    .stub.half { background-size: 1px 10px, 9px 1px; }
    .toggle { width: 11px; height: 11px; }
    .toggle svg { width: 11px; height: 11px; }
    .label { padding: 0 0 0 2px; margin-left: 2px; height: 19px; border: 0; flex: 1; justify-content: flex-start; text-align: left; }
    .line > svg { margin-left: 1px; }
    .dim { color: #808080; }
    .sel { background: #3399ff; color: #fff; outline: 1px dotted #b8702c; outline-offset: -1px; }
    .stars { width: 78px; height: 14px; margin-left: 7px; }
    td .i16 { margin: 0 auto; }
    .scroll { width: 17px; flex: none; background: #f0f0f0; display: flex; flex-direction: column; align-items: stretch; border-left: 1px solid #fff; }
    .scroll button { height: 18px; color: #505050; }
    .thumb { height: 73px; margin: 28px 0 auto; background: #cdcdcd; }
    .strip { display: flex; align-items: center; height: 26px; flex: none; background: var(--bar); gap: 5px; }
    .strip div { display: flex; }
    .strip button { width: 25px; height: 22px; }
    .listbar { padding-left: 3px; }

    .tabs { display: flex; align-items: flex-end; height: 24px; flex: none; margin-top: 2px; padding: 0 4px 2px; background: linear-gradient(#90a8b6, #546c7a); box-shadow: inset 0 -2px #8099a7, inset 0 -3px #203c4c; }
    .tab { height: 19px; padding: 1px 4px 0; border: 1px solid transparent; background: #7890a0; }
    .tab.on { height: 21px; padding: 1px 5px 0 3px; border-color: #203c4c; border-bottom-color: #8099a7; background: #8099a7; }
    .empty { flex: 1; min-height: 0; background: #fff; display: flex; align-items: center; justify-content: center; padding-top: 9px; }
    .pager { display: flex; height: 19px; flex: none; background: #f0f0f0; }
    .pager button { width: 17px; height: 19px; background: #90a9b8; color: #2c3c48; }
    .pager svg { width: 12px; height: 12px; }
    .count { background: #fff; width: 40px; padding-top: 1px; display: flex; align-items: center; justify-content: center; white-space: nowrap; }

    .jobs { flex: 279 1 0; min-height: 0; display: flex; flex-direction: column; padding: 4px 2px 0; }
    .jobs table { margin-top: 1px; flex: none; }
    .jobs th { height: 20px; padding: 1px 4px 0 0; }
    .sheet { flex: 1; background: #fff; }
    .btabs { display: flex; align-items: flex-start; height: 25px; flex: none; margin-top: 1px; background: var(--bar); border-top: 1px solid #304c5c; padding-left: 5px; border-bottom: 1px solid #b4cad6; }
    .btab { height: 20px; padding: 2px 4px 0 4px; border: 1px solid transparent; white-space: nowrap; }
    .btab.on { border-color: #304c5c; border-top-color: transparent; background: #8ea6b4; padding: 2px 3px 0 3px; }
    .btab + .btab + .btab { border-left-color: #c8dae4; }

    .status { display: flex; height: 21px; flex: none; gap: 2px; padding: 1px 2px; background: #86a0ae; }
    .slot { display: flex; align-items: center; justify-content: center; gap: 5px; padding-top: 1px; border: 1px solid #5c7684; background: var(--bar); white-space: nowrap; }
    .w22 { width: 22px; } .w32 { width: 32px; } .w39 { width: 39px; } .w42 { width: 42px; } .w102 { width: 102px; } .w169 { width: 169px; }
    .trio { display: flex; }
    .sw { width: 13px; height: 13px; border: 1px solid #5c7684; }
    .k { background: #000; } .w { background: #fff; } .a { background: #8ea6b4; } .b { background: #b4d0e0; }

    .task { display: flex; height: 40px; flex: none; background: linear-gradient(90deg, #1d2125, #24231f 40%, #352d22 62%, #332d23 78%, #2a2c26 84%, #302a20); color: #fff; font-family: "Open Sans", sans-serif; }
    .start { width: 64px; justify-content: flex-start; align-items: flex-end; padding-left: 5px; }
    .pig { width: 44px; height: 44px; }
    .app { width: 49px; border-bottom: 3px solid transparent; padding-top: 3px; }
    .app.open { border-image: linear-gradient(90deg, transparent 4px, #76b9ed 4px, #76b9ed calc(100% - 4px), transparent calc(100% - 4px)) 3; }
    .app.active { background: #5c554d; border-bottom-color: #76b9ed; }
    .tray { display: flex; align-items: center; }
    .tray button { width: 24px; height: 40px; }
    .tray .lang { width: 36px; font-size: 11px; }
    .tray .clock { width: 70px; flex-direction: column; gap: 4px; line-height: 14px; }
    .tray .note { width: 40px; }
    .tray .desk { border-left: 1px solid #686058; margin-left: 6px; width: 7px; }
  `;

  private renderNode(n: Node, i: number) {
    const cells = [];
    for (let l = 0; l < n.level; l++) {
      cells.push(html`<span class=${classMap({ cell: true, rail: !!n.rails?.includes(l) })}></span>`);
    }
    return html`<tr>
      <td><div class="line">
        ${cells}
        <span class=${classMap({ cell: true, stub: true, half: !!n.last })}>
          ${n.toggle ? html`<button class="toggle" aria-label=${n.toggle === "plus" ? "Развернуть" : "Свернуть"}>
            <svg viewBox="0 0 11 11" aria-hidden="true"><rect x=".5" y=".5" width="10" height="10" rx="1" fill="#e0eaf8" stroke="#6c84a4"/>
            <path d=${n.toggle === "plus" ? "M3 5.500 H8 M5.500 3 V8" : "M3 5.500 H8"} stroke="#1c2c4c"/></svg></button>` : nothing}
        </span>
        ${icon(n.icon, "s", "i16")}
        <button class=${classMap({ label: true, dim: !!n.dim, sel: i === this.selected })} @click=${() => (this.selected = i)}>${n.text}</button>
      </div></td>
      <td>${stars}</td><td></td><td></td>
      <td>${n.sort ? icon(n.sort, "s", "i16") : nothing}</td>
    </tr>`;
  }

  private navButton(label: string) {
    return html`<button aria-label=${label}><svg viewBox="0 0 12 12" aria-hidden="true"><path d=${navIcons[label]} fill="currentColor" stroke="currentColor" stroke-width=".5"/></svg></button>`;
  }

  render() {
    const nav = Object.keys(navIcons);
    return html`
      <svg class="defs" aria-hidden="true"><defs>${gradients}</defs></svg>
      <header class="title">
        ${icon("serverMonitor", "m", "i16")}
        <h1>Домашний медиа-сервер (UPnP, DLNA, HTTP)</h1>
        <button aria-label="Свернуть окно"><svg class="winglyph" viewBox="0 0 11 11"><path d="M0 5.500 H10" stroke="#fff"/></svg></button>
        <button aria-label="Восстановить"><svg class="winglyph" viewBox="0 0 11 11"><path d="M.5 2.500 H8.500 V10.500 H.5Z M2.500 2 V.5 H10.500 V8.500 H9" fill="none" stroke="#fff"/></svg></button>
        <button aria-label="Закрыть"><svg class="winglyph" viewBox="0 0 11 11"><path d="M.5 .5 L10.500 10.500 M10.500 .5 L.5 10.500" stroke="#fff"/></svg></button>
      </header>

      <nav class="toolbar">
        <span class="grip"></span>
        ${toolGroups.map((g) => html`<div class="tools">${g.map(([n, t]) => html`
          <button class="tool" ?disabled=${n === "start"}>${icon(n, n === "refresh" ? "xl" : "l", "i46")}<span>${t}</span></button>`)}</div>`)}
        <span class="grow"></span>
        <button class="tool help">${icon("help", "l", "i46")}<span>Помощь</span></button>
      </nav>

      <main class="work">
        <section class="panel">
          <div class="caption active"><h2 class="grow">Папки [Фильмы]</h2>${arrow}${pin}</div>
          <div class="tree">
            <div class="scroller">
              <table>
                <colgroup><col /><col class="c-rate" /><col class="c-flag" /><col class="c-flag" /><col class="c-flag" /></colgroup>
                <thead><tr><th></th><th>Оценка</th><th>${icon("people", "s", "i16")}</th><th>${icon("key", "s", "i16")}</th><th>${icon("up", "s", "i16")}</th></tr></thead>
                <tbody>${nodes.map((n, i) => this.renderNode(n, i))}</tbody>
              </table>
            </div>
            <div class="scroll">
              <button aria-label="Вверх"><svg class="glyph" viewBox="0 0 10 12"><path d="M1.500 8 L5 4.500 L8.500 8" fill="none" stroke="currentColor" stroke-width="2"/></svg></button>
              <div class="thumb"></div>
              <button aria-label="Вниз"><svg class="glyph" viewBox="0 0 10 12"><path d="M1.500 4.500 L5 8 L8.500 4.500" fill="none" stroke="currentColor" stroke-width="2"/></svg></button>
            </div>
          </div>
          <div class="strip">${folderTools.map((g) => html`<div>${g.map(([n, t]) => html`<button aria-label=${t}>${icon(n, "s", "i16")}</button>`)}</div>`)}</div>
        </section>

        <section class="panel">
          <div class="caption"><h2 class="grow">Список [Фильмы]</h2>${arrow}${pin}</div>
          <div class="tabs" role="tablist">
            ${["Таблица", "Карточки"].map((t, i) => html`<button role="tab" aria-selected=${i === this.listTab} class=${classMap({ tab: true, on: i === this.listTab })} @click=${() => (this.listTab = i)}>${t}</button>`)}
          </div>
          <div class="empty">&lt;No data to display&gt;</div>
          <div class="pager">
            ${nav.slice(0, 3).map((l) => this.navButton(l))}
            <span class="count">0 of 0</span>
            ${nav.slice(3).map((l) => this.navButton(l))}
          </div>
          <div class="strip listbar">
            <div><button aria-label="Сортировка">${icon("up", "s", "i16")}</button></div>
            <div><button aria-label="Порядок">${icon("sortPic", "s", "i16")}</button></div>
          </div>
        </section>
      </main>

      <section class="jobs">
        <div class="caption"><h2 class="grow">Транскодирование</h2>${pin}</div>
        <table>
          <colgroup>${columns.map(([, w]) => html`<col style="width:${w}px" />`)}</colgroup>
          <thead><tr>${columns.map(([t]) => html`<th>${t}</th>`)}</tr></thead>
        </table>
        <div class="sheet"></div>
        <div class="btabs" role="tablist">
          ${["Транскодирование", "Журнал сообщений", "Устройства воспроизведения (DMR)"].map((t, i) => html`
            <button role="tab" aria-selected=${i === this.bottomTab} class=${classMap({ btab: true, on: i === this.bottomTab })} @click=${() => (this.bottomTab = i)}>${t}</button>`)}
        </div>
      </section>

      <div class="status">
        <span class="slot grow"></span>
        <span class="slot w22">${icon("puzzle", "s", "i16")}</span>
        <span class="slot w22">${icon("wheel", "s", "i16")}</span>
        <span class="trio">
          <span class="slot w39"><i class="sw a"></i><i class="sw k"></i></span>
          <span class="slot w39"><i class="sw w"></i><i class="sw k"></i></span>
          <span class="slot w39"><i class="sw b"></i><i class="sw k"></i></span>
        </span>
        <span class="slot w102">15752</span>
        <span class="slot w102">0</span>
        <span class="slot w102">0</span>
        <span class="slot w42">${icon("drive", "s", "i16")}<i class="sw w"></i></span>
        <span class="slot w32">1</span>
        <span class="slot w32">0</span>
        <span class="slot w169">В. 2.33 от 12.09.2017</span>
      </div>

      <footer class="task">
        <button class="start" aria-label="Пуск">${icon("pig", "l", "pig")}</button>
        ${taskApps.map(([n, s]) => html`<button class=${`app ${s}`} aria-label=${n}>${icon(n, "m", "i24")}</button>`)}
        <span class="grow"></span>
        <div class="tray">
          ${["telegram", "bars", "serverMonitor", "signal", "flag", "mouse", "shield", "network"].map((n) => html`<button aria-label=${n}>${icon(n, "m", "i16")}</button>`)}
          <button class="lang">РУС</button>
          <button class="clock"><span>12:35</span><span>13-02-2020</span></button>
          <button class="note" aria-label="Уведомления">${icon("notify", "m", "i16")}</button>
          <button class="desk" aria-label="Рабочий стол"></button>
        </div>
      </footer>
    `;
  }
}
